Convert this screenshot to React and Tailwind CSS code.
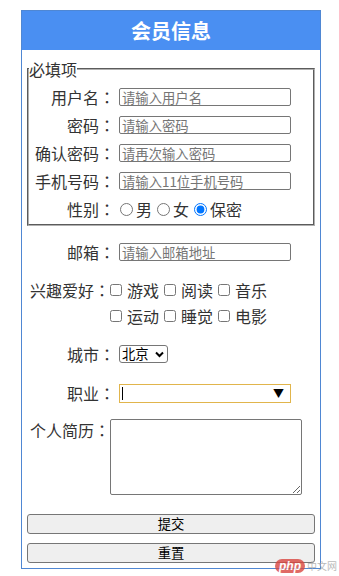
import { useState } from 'react';

const inputCls =
  'w-[172px] h-[18px] ml-[4px] border border-[#767676] rounded-[2px] px-[2px] text-[13.33px] leading-[16px] text-black placeholder:text-[#757575] outline-none';

// centred full-width colon, as in the reference's font
const Colon = () => <span className="font-['Noto_Sans_CJK_TC',sans-serif]">：</span>;

const FieldRow = ({ label, placeholder, type = 'text' }) => (
  <div className="flex h-[28px] items-center">
    <span className="w-[86px] shrink-0 text-right whitespace-nowrap">
      {label}
      <Colon />
    </span>
    <input type={type} placeholder={placeholder} className={inputCls} />
  </div>
);

const hobbies = ['游戏', '阅读', '音乐', '运动', '睡觉', '电影'];

const App = () => {
  const [gender, setGender] = useState('secret');

  return (
    <div className="relative w-[339px] h-[576px] bg-white text-[16px] text-[#333] font-['Noto_Sans_CJK_SC',sans-serif]">
      <div className="ml-[21px] pt-[10px] w-[300px]">
        <form className="border border-[#4f87d3]" onSubmit={(e) => e.preventDefault()}>
          <div className="h-[39px] bg-[#4a8ff2] flex items-center justify-center text-white text-[20px] font-bold">
            会员信息
          </div>

          <fieldset className="mx-[5px] mt-[10px] border-2 [border-style:groove] border-[#b0b0b0] px-0 pt-[5px] pb-[1px]">
            <legend className="text-[16px] leading-[18px] px-0">必填项</legend>
            <FieldRow label="用户名" placeholder="请输入用户名" />
            <FieldRow label="密码" placeholder="请输入密码" type="password" />
            <FieldRow label="确认密码" placeholder="请再次输入密码" type="password" />
            <FieldRow label="手机号码" placeholder="请输入11位手机号码" />
            <div className="flex h-[28px] items-center">
              <span className="w-[86px] shrink-0 text-right whitespace-nowrap">
                性别<Colon />
              </span>
              {[
                ['male', '男'],
                ['female', '女'],
                ['secret', '保密'],
              ].map(([v, t]) => (
                <label key={v} className="flex items-center">
                  <input
                    type="radio"
                    name="gender"
                    checked={gender === v}
                    onChange={() => setGender(v)}
                    className="w-[13px] h-[13px] ml-[5px] mr-[3px]"
                  />
                  {t}
                </label>
              ))}
            </div>
          </fieldset>

          <div className="flex h-[28px] items-center mt-[12px]">
            <span className="w-[93px] shrink-0 text-right whitespace-nowrap">
              邮箱<Colon />
            </span>
            <input type="email" placeholder="请输入邮箱地址" className={inputCls} />
          </div>

          <div className="flex pl-[8px] mt-[11px]">
            <span className="w-[80px] shrink-0 leading-[26px] whitespace-nowrap">
              兴趣爱好<Colon />
            </span>
            <div className="w-[170px] flex flex-wrap">
              {hobbies.map((h) => (
                <label key={h} className="w-[54px] h-[26px] flex items-center">
                  <input type="checkbox" className="w-[12px] h-[12px] m-0 mr-[5px]" />
                  {h}
                </label>
              ))}
            </div>
          </div>

          <div className="flex h-[28px] items-center mt-[11px]">
            <span className="w-[93px] shrink-0 text-right whitespace-nowrap">
              城市<Colon />
            </span>
            <div className="ml-[4px] w-[49px] h-[18px] border border-[#767676] rounded-[3px] flex items-center justify-between pl-[2px] pr-[3px] text-[13.33px] text-black">
              北京
              <svg width="9" height="7" viewBox="0 0 9 7">
                <path d="M1 1.5 L4.5 5 L8 1.5" fill="none" stroke="#000" strokeWidth="2" />
              </svg>
            </div>
          </div>

          <div className="flex h-[28px] items-center mt-[11px]">
            <span className="w-[93px] shrink-0 text-right whitespace-nowrap">
              职业<Colon />
            </span>
            <div className="ml-[4px] w-[172px] h-[19px] border border-[#e1b54c] flex items-center justify-between pl-[2px] pr-[6px]">
              <span className="w-px h-[13px] bg-black" />
              <span className="text-[11px] leading-none text-black">▼</span>
            </div>
          </div>

          <div className="flex pl-[8px] mt-[12px]">
            <span className="w-[80px] shrink-0 leading-[22px] whitespace-nowrap">
              个人简历<Colon />
            </span>
            <textarea className="w-[192px] h-[76px] border border-[#767676] rounded-[2px] outline-none" />
          </div>

          <div className="px-[5px] pt-[19px] pb-[5px] flex flex-col gap-[9px]">
            <button type="submit" className="h-[20px] bg-[#efefef] border border-[#767676] rounded-[3px] text-[13.33px] leading-none text-black">
              提交
            </button>
            <button type="reset" className="h-[20px] bg-[#efefef] border border-[#767676] rounded-[3px] text-[13.33px] leading-none text-black">
              重置
            </button>
          </div>
        </form>
      </div>

      <div className="absolute left-[275px] top-[559px] flex items-center gap-[2px] opacity-80">
        <span className="h-[14px] px-[4px] rounded-full bg-[#d9463f] text-white text-[12px] leading-[14px] font-['Liberation_Sans',sans-serif] font-bold italic">
          php
        </span>
        <span className="text-[10px] leading-none text-[#aaa]">中文网</span>
      </div>
    </div>
  );
};

export default App;
